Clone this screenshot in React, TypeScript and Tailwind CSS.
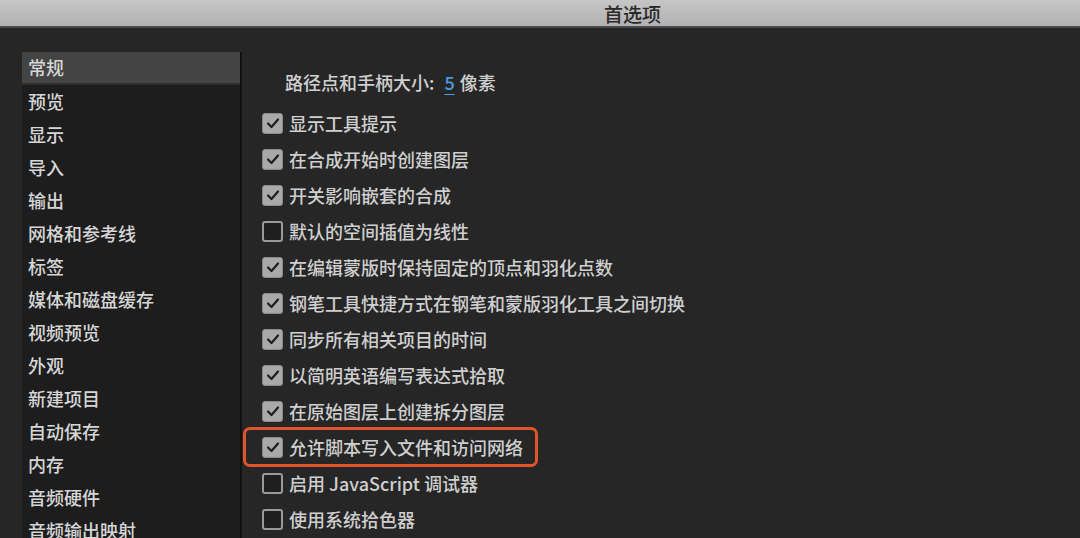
import React from "react";

const CATS = [
  "常规",
  "预览",
  "显示",
  "导入",
  "输出",
  "网格和参考线",
  "标签",
  "媒体和磁盘缓存",
  "视频预览",
  "外观",
  "新建项目",
  "自动保存",
  "内存",
  "音频硬件",
  "音频输出映射",
];

const OPTIONS: { label: string; checked: boolean; hl?: boolean }[] = [
  { label: "显示工具提示", checked: true },
  { label: "在合成开始时创建图层", checked: true },
  { label: "开关影响嵌套的合成", checked: true },
  { label: "默认的空间插值为线性", checked: false },
  { label: "在编辑蒙版时保持固定的顶点和羽化点数", checked: true },
  { label: "钢笔工具快捷方式在钢笔和蒙版羽化工具之间切换", checked: true },
  { label: "同步所有相关项目的时间", checked: true },
  { label: "以简明英语编写表达式拾取", checked: true },
  { label: "在原始图层上创建拆分图层", checked: true },
  { label: "允许脚本写入文件和访问网络", checked: true, hl: true },
  { label: "启用 JavaScript 调试器", checked: false },
  { label: "使用系统拾色器", checked: false },
];

function Checkbox({ checked }: { checked: boolean }) {
  if (checked) {
    return (
      <span className="w-[21px] h-[21px] rounded-[3px] bg-[#a9a9a9] border border-[#8a8a8a] flex items-center justify-center shrink-0">
        <svg width="14" height="12" viewBox="0 0 14 12">
          <path d="M2 6.5 L5.5 10 L12 2.5" fill="none" stroke="#1e1e1e" strokeWidth="2.2" strokeLinecap="round" strokeLinejoin="round" />
        </svg>
      </span>
    );
  }
  return <span className="w-[21px] h-[21px] rounded-[3px] bg-[#1f1f1f] border-2 border-[#9a9a9a] shrink-0" />;
}

export default function App() {
  return (
    <div
      className="w-[1080px] h-[538px] overflow-hidden bg-[#262626] flex flex-col"
      style={{ fontFamily: '"Noto Sans CJK SC", "Noto Sans", sans-serif' }}
    >
      <div className="h-[28px] shrink-0 bg-gradient-to-b from-[#c6c6c6] to-[#b2b2b2] border-b-2 border-[#4a4a4a] flex items-center">
        <span className="ml-[604px] text-[19px] leading-none text-[#2a2a2a] font-medium">首选项</span>
      </div>
      <div className="flex flex-1 min-h-0">
        <div className="ml-[22px] mt-[24px] w-[220px] bg-[#1d1d1d] border-r-2 border-[#111] flex flex-col">
          {CATS.map((c, i) => (
            <div
              key={c}
              className={`h-[33px] shrink-0 flex items-center pl-[6px] text-[18px] font-medium text-[#d6d6d6] ${
                i === 0 ? "bg-[#444] border-b-2 border-[#2e2e2e]" : ""
              }`}
            >
              {c}
            </div>
          ))}
        </div>
        <div className="flex-1 flex flex-col pt-[42px] pl-[18px]">
          <div className="h-[24px] flex items-center pl-[25px] text-[18px] font-medium text-[#cfcfcf] mb-[11px]">
            路径点和手柄大小:
            <span className="ml-[10px] text-[#4e9be0] underline underline-offset-4">5</span>
            <span className="ml-[5px]">像素</span>
          </div>
          <div className="flex flex-col">
            {OPTIONS.map((o) => (
              <div
                key={o.label}
                className={`shrink-0 flex items-center gap-[6px] ${
                  o.hl
                    ? "-ml-[17px] pl-[16px] w-[295px] border-[3px] border-[#e2552c] rounded-[7px] h-[40px] -my-[2px]"
                    : "pl-[2px] h-[36px]"
                }`}
              >
                <Checkbox checked={o.checked} />
                <span className="text-[18px] font-medium text-[#cfcfcf] whitespace-nowrap">{o.label}</span>
              </div>
            ))}
          </div>
        </div>
      </div>
    </div>
  );
}
